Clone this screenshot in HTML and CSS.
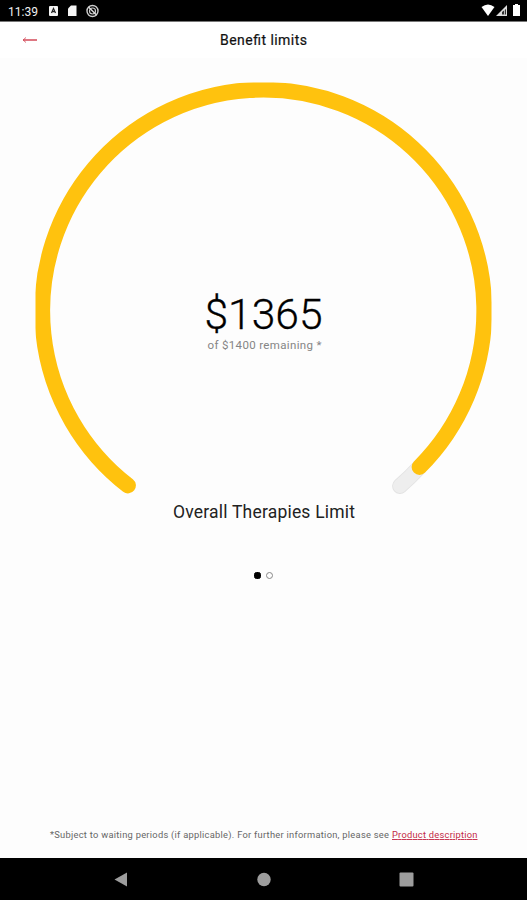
FILE: index.html
```html
<!DOCTYPE html>
<html lang="en">
<head>
<meta charset="utf-8">
<title>Benefit limits</title>
<link rel="stylesheet" href="styles.css">
</head>
<body>
<div class="status">
  <span class="clock"><svg width="34" height="21"><text x="0" y="15.500" textLength="30" lengthAdjust="spacingAndGlyphs">11:39</text></svg></span>
  <svg class="notices" width="52" height="21" viewBox="0 0 52 21">
    <rect x="1" y="6" width="9" height="10" rx="1" fill="#f5f5f5"/>
    <path d="M3.500 13 5.500 8.500 7.500 13M4.200 11.600h2.600" fill="none" stroke="#222" stroke-width="1.200"/>
    <path d="M23 5.500h5.500v10.500h-8.500v-7.500z" fill="#f5f5f5"/>
    <circle cx="44.500" cy="11" r="5.500" fill="none" stroke="#ccc" stroke-width="1.400"/>
    <circle cx="44.500" cy="11" r="3" fill="none" stroke="#ccc" stroke-width="1.200"/>
    <path d="M40.500 7 48.500 15" stroke="#ddd" stroke-width="1.400"/>
  </svg>
  <svg class="signals" width="42" height="21" viewBox="0 0 42 21">
    <path d="M.500 7Q7 2 13.500 7L7 16z" fill="#fff"/>
    <path d="M15 16 26 5V16z" fill="#ddd"/>
    <path d="M21 14.500V12l4-3v5.500z" fill="#333"/>
    <path d="M23.500 10v5" stroke="#bbb"/>
    <path d="M32 5h2V4h3v1h2v11h-7z" fill="#fff"/>
  </svg>
</div>
<header class="header">
  <svg class="back" width="16" height="10" viewBox="0 0 16 10"><path d="M1 5h14" stroke="#d34a59" stroke-width="1.500"/><path d="M4 2.500 1 5l3 2.500" fill="none" stroke="#d34a59" stroke-width=".8"/></svg>
  <svg width="89" height="20"><text class="title" x="1" y="12" textLength="87">Benefit limits</text></svg>
</header>
<main class="main">
  <svg class="gauge" width="527" height="438" viewBox="0 58 527 438">
    <clipPath id="bounds"><rect x="35.500" y="82.500" width="456" height="413"/></clipPath>
    <g clip-path="url(#bounds)" fill="none" stroke-width="15.800" stroke-linecap="round">
      <path d="M419.500 467A221 221 0 0 1 400 486" stroke="#e3e3e3"/>
      <path d="M419.500 467A221 221 0 0 1 400 486" stroke="#eee" stroke-width="14"/>
      <path d="M128 485.500A221 221 0 1 1 419.500 467" stroke="#ffc20e"/>
    </g>
    <text class="amount" x="204.500" y="328.500" textLength="118" lengthAdjust="spacingAndGlyphs">$1365</text>
    <text class="remaining" x="207.500" y="349" textLength="114">of $1400 remaining *</text>
  </svg>
  <svg width="184" height="28"><text class="limit" x="1" y="22" textLength="182">Overall Therapies Limit</text></svg>
  <div class="pager"><i class="dot current"></i><i class="dot"></i></div>
  <svg class="note" width="430" height="16"><text x="1" y="10" textLength="339">*Subject to waiting periods (if applicable). For further information, please see</text><text class="link" x="343" y="10" textLength="85.500">Product description</text></svg>
</main>
<nav class="nav">
  <svg width="527" height="42" viewBox="0 858 527 42" fill="#9d9d9d">
    <path d="M114.500 879.500 127 872.500V886.500z"/>
    <circle cx="264" cy="879.500" r="6.700"/>
    <rect x="399.500" y="872.500" width="14" height="14" rx="1"/>
  </svg>
</nav>
</body>
</html>
```
FILE: styles.css
```css
* { box-sizing: border-box; }
body {
  margin: 0;
  height: 900px;
  display: flex;
  flex-direction: column;
  background: #fdfdfd;
  color: #111;
  font-family: Roboto, "Liberation Sans", sans-serif;
  overflow: hidden;
}
svg { display: block; flex: none; }
.status {
  height: 21px;
  flex: none;
  display: flex;
  background: #000;
  padding: 0 4px 0 8px;
}
.clock { font-size: 13px; }
.clock text { fill: #f0f0f0; }
.notices { margin-left: 6px; }
.signals { margin-left: auto; }
.header {
  height: 37px;
  flex: none;
  display: grid;
  grid-template-columns: 1fr auto 1fr;
  padding-top: 11px;
  background: #fff;
  border-top: 1px solid #777;
}
.back { margin: 2px 0 0 22px; }
.title { font-size: 14px; fill: #111; stroke: #111; stroke-width: .2px; }
.main {
  flex: 1;
  display: flex;
  flex-direction: column;
  align-items: center;
}
.amount { font-size: 42px; font-weight: 300; fill: #000; stroke: #000; stroke-width: .3px; }
.remaining { font-size: 11.5px; fill: #858585; }
.limit { font-size: 17.5px; fill: #222; }
.pager {
  display: flex;
  gap: 5px;
  margin-top: 47px;
  height: 8px;
  align-items: center;
}
.dot {
  width: 7px;
  height: 7px;
  border: 1px solid #888;
  border-radius: 50%;
}
.current { background: #000; border-color: #000; border-radius: 2.5px; }
.note { margin: auto 0 14px; font-size: 9.3px; fill: #666; }
.link { fill: #c32945; text-decoration: underline; }
.nav { height: 42px; flex: none; background: #000; }
```
